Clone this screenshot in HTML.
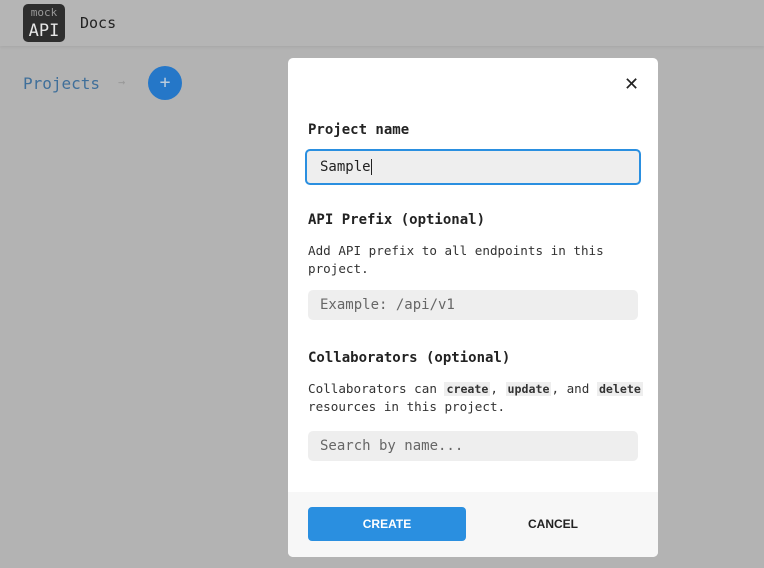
<!DOCTYPE html>
<html><head><meta charset="utf-8"><style>
*{box-sizing:border-box;margin:0;padding:0}
body{width:764px;height:568px;overflow:hidden;background:#b3b3b3;font-family:"DejaVu Sans Mono","Liberation Mono",monospace;position:relative}
.hdr{position:absolute;left:0;top:0;width:764px;height:46px;background:#b5b5b5;box-shadow:0 1px 3px rgba(0,0,0,.08)}
.logo{position:absolute;left:23px;top:4px;width:42px;height:38px;background:#2e2e2e;border-radius:5px;color:#ddd;text-align:center;line-height:1}
.logo .m{font-size:11px;position:absolute;top:3px;left:0;width:100%;color:#999}
.logo .a{font-size:17px;position:absolute;top:19px;left:0;width:100%;color:#e5e5e5}
.docs{position:absolute;left:80px;top:14px;font-size:15px;color:#222}
.proj{position:absolute;left:23px;top:74px;font-size:16px;color:#3f6f9a}
.arr{position:absolute;left:118px;top:75px;font-size:12px;color:#999}
.circ{position:absolute;left:148px;top:66px;width:34px;height:34px;border-radius:50%;background:#2577c8;color:#bcd;text-align:center;line-height:34px;font-size:18px}
.modal{position:absolute;left:288px;top:58px;width:370px;height:499px;background:#fff;border-radius:5px;overflow:hidden}
.x{position:absolute;left:336px;top:16px;font-size:18px;color:#222;font-family:"DejaVu Sans",sans-serif}
h3{position:absolute;left:20px;font-size:14px;font-weight:bold;color:#222}
p{position:absolute;left:20px;font-size:12.6px;color:#333;line-height:18px;width:345px}
code{background:#eee;font-weight:bold;font-size:11.6px;padding:0 2px}
.in{position:absolute;left:20px;width:330px;height:30px;background:#eee;border-radius:5px;font-size:14px;color:#666;padding-left:12px;line-height:30px}
.foc{left:17px;width:336px;height:36px;border:2px solid #2a8fe0;color:#222;line-height:32px;padding-left:13px}
.ft{position:absolute;left:0;top:434px;width:370px;height:65px;background:#f7f7f7}
.btn{position:absolute;top:15px;height:34px;width:158px;border-radius:4px;font-family:"Liberation Sans",sans-serif;font-weight:bold;font-size:12px;text-align:center;line-height:34px}
.cr{left:20px;background:#2a8fe0;color:#fff}
.cn{left:186px;color:#222}
</style></head><body>
<div class="hdr"><div class="logo"><div class="m">mock</div><div class="a">API</div></div><div class="docs">Docs</div></div>
<div class="proj">Projects</div><div class="arr">→</div><div class="circ">+</div>
<div class="modal">
<div class="x">✕</div>
<h3 style="top:64px">Project name</h3>
<div class="in foc" style="top:91px">Sample<span style="border-left:1px solid #222;height:16px;display:inline-block;vertical-align:middle"></span></div>
<h3 style="top:154px">API Prefix (optional)</h3>
<p style="top:184px">Add API prefix to all endpoints in this project.</p>
<div class="in" style="top:232px">Example: /api/v1</div>
<h3 style="top:292px">Collaborators (optional)</h3>
<p style="top:322px">Collaborators can <code>create</code>, <code>update</code>, and <code>delete</code> resources in this project.</p>
<div class="in" style="top:373px">Search by name...</div>
<div class="ft"><div class="btn cr">CREATE</div><div class="btn cn">CANCEL</div></div>
</div>
</body></html>
